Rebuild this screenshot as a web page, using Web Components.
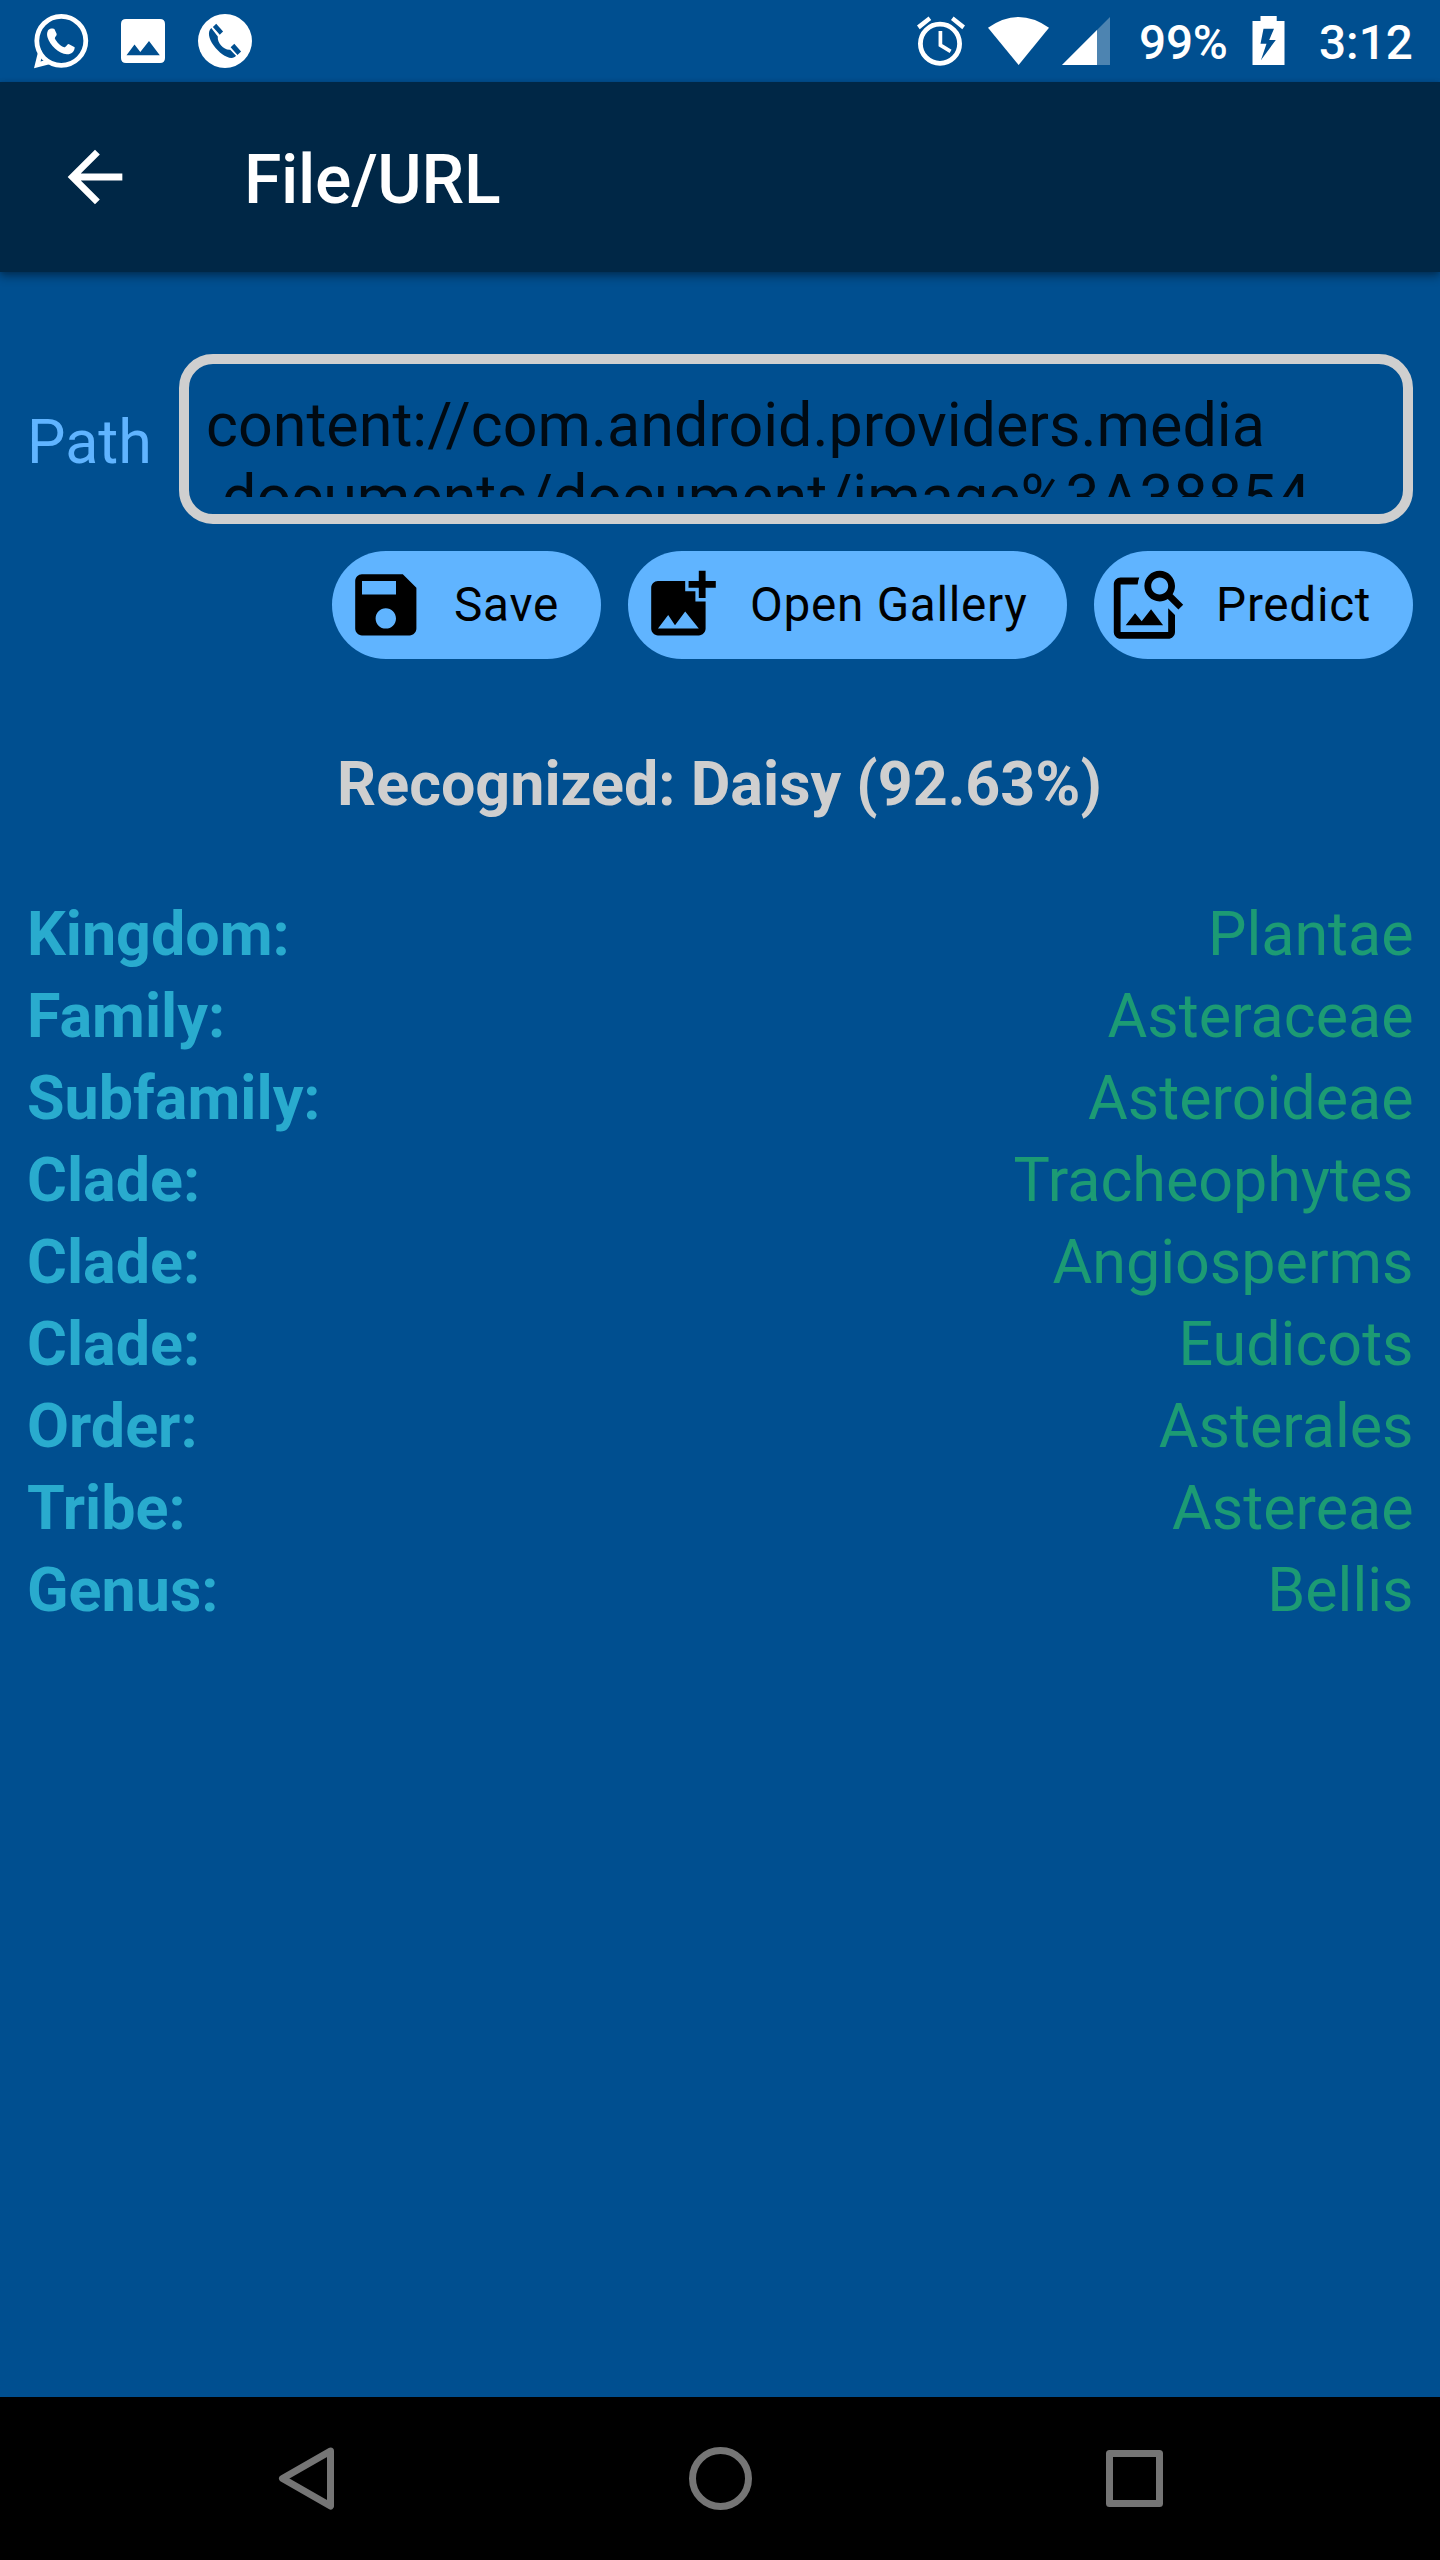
<!DOCTYPE html>
<html lang="en">
<head>
<meta charset="utf-8">
<title>File/URL</title>
<style>
html, body { margin: 0; height: 100%; }
body { font-family: Roboto, sans-serif; background: #004f90; }
</style>
</head>
<body>
<plant-app></plant-app>
<script>
const define = (name, html) => {
  const template = document.createElement('template');
  template.innerHTML = html;
  customElements.define(name, class extends HTMLElement {
    constructor() {
      super();
      this.attachShadow({ mode: 'open' }).appendChild(template.content.cloneNode(true));
    }
  });
};

define('status-bar', `
<style>
:host { display: flex; justify-content: space-between; height: 82px; box-sizing: border-box; background: #004f90; color: #fff; font-size: 47.7px; font-weight: 500; line-height: 82px; }
div { display: flex; align-items: flex-start; }
svg { display: block; height: 82px; fill: #fff; }
span { display: block; padding-top: 1.5px; white-space: nowrap; }
.pct { width: 113px; margin-left: 28px; letter-spacing: -.2px; }
.time { width: 96px; margin-left: 34px; }
.right { padding-right: 25px; }
</style>
<div>
  <svg width="260" viewBox="0 0 260 82">
    <circle cx="61.3" cy="40.8" r="24.5" fill="none" stroke="#fff" stroke-width="4.8"/>
    <path d="M38.5 50 L34 68.3 L49.5 64.3 L52 62 L47.5 59.5 L40.5 61.5 L42.8 54 L40 48Z"/>
    <path d="M50.2 28.8 C47.8 29.5 46.4 33 47.5 37.2 C50 45.5 58.5 53.5 67 54.2 C71 54.4 74.5 52 74.7 47.2 L68.6 44 C67.2 44 66 47.4 64.2 47.3 C60.6 46.2 56.4 41.8 54.8 38.2 C55 36.6 57.3 35.4 56.6 33.7 L54.4 29.1 C53.9 28.1 51.8 28.3 50.2 28.8Z"/>
    <path fill-rule="evenodd" d="M126 19H160Q165 19 165 24V58Q165 63 160 63H126Q121 63 121 58V24Q121 19 126 19ZM126.5 55.3H159.8L149 41L140.3 52L134.5 44.6Z"/>
    <circle cx="225" cy="41" r="27"/>
    <g fill="#004f90">
      <path d="M211.3 28 C207.3 31.5 208.7 38.5 213.5 45.2 C219 52.5 225.5 57.5 231.5 58 C233.5 57.9 234.9 57 236 55.7 L230.2 49.7 C224.4 50.5 217 43.5 217.8 36.5Z"/>
      <path d="M212.9 27.1L216.2 23.8L223.1 31.5L219.7 34.8Z"/>
      <path d="M230.6 47.3L234.3 43.8L241.1 51.5L237.5 55Z"/>
    </g>
    <path d="M212.4 27.6L219.2 35.3M230.1 47.8L237 55.5" stroke="#fff" stroke-width=".6" fill="none"/>
  </svg>
</div>
<div class="right">
  <svg width="195" viewBox="916 0 195 82">
    <circle cx="940" cy="43.7" r="19.6" fill="none" stroke="#fff" stroke-width="4.8"/>
    <path d="M917 25.5L928.6 16.6L931.2 20.1L919.7 29.2ZM965 25.5L953.6 16.6L951 20.1L962.3 29.2Z"/>
    <path d="M940.4 31V45.2L950.6 51.3" fill="none" stroke="#fff" stroke-width="3.7"/>
    <path d="M988 27.8 Q1018.5 6.2 1049 27.8 L1018.6 65Z"/>
    <path d="M1062 65L1110 17V65Z" opacity=".3"/>
    <path d="M1062 65L1097 30V65Z"/>
  </svg>
  <span class="pct">99%</span>
  <svg width="33" viewBox="1252 0 33 82">
    <path fill-rule="evenodd" d="M1260.5 16H1276.7V21H1284.5V65H1252.5V21H1260.5ZM1263.5 28.7L1260.5 43.8H1266.5L1261 60L1275.8 40H1269.2L1274 28.7Z"/>
  </svg>
  <span class="time">3:12</span>
</div>`);

define('app-bar', `
<style>
:host { display: flex; align-items: center; height: 190px; background: #002746; color: #fff; box-shadow: 0 5px 9px rgba(0,0,0,.32), 0 1px 5px rgba(0,0,0,.18); z-index: 1; }
svg { display: block; width: 82px; height: 82px; margin-left: 54px; fill: #fff; }
h1 { margin: 5px 0 0 108px; font-size: 67.9px; font-weight: 500; line-height: 80px; letter-spacing: -.3px; }
</style>
<svg viewBox="0 0 24 24"><path d="M20 11H7.83l5.59-5.59L12 4l-8 8 8 8 1.41-1.41L7.83 13H20v-2z"/></svg>
<h1><slot></slot></h1>`);

define('path-field', `
<style>
:host { display: flex; align-items: center; }
label { width: 152px; padding-top: 5px; font-size: 61px; line-height: 72px; color: #60b4ff; }
.box { flex: 1; height: 170px; box-sizing: border-box; border: 10px solid #cfcfcf; border-radius: 34px; padding: 25px 16px 17px 17px; }
.clip { height: 108px; overflow: hidden; font-size: 61px; line-height: 72px; color: rgba(0,0,0,.87); white-space: pre; }
</style>
<label>Path</label>
<div class="box"><div class="clip"><slot></slot></div></div>`);

define('chip-button', `
<style>
:host { display: flex; align-items: center; height: 108px; border-radius: 54px; background: #60b4ff; color: #000; box-sizing: border-box; padding-left: 13px; font-size: 47.7px; line-height: 56px; letter-spacing: .7px; white-space: nowrap; }
::slotted(svg) { display: block; width: 81.6px; height: 81.6px; margin-right: 27.5px; flex: none; }
</style>
<slot name="icon"></slot><span><slot></slot></span>`);

define('taxon-row', `
<style>
:host { display: flex; justify-content: space-between; font-size: 61px; line-height: 82px; color: #1c9b74; margin-right: -.6px; }
b { color: #29abce; font-weight: 700; }
</style>
<b><slot name="rank"></slot></b><slot></slot>`);

define('nav-bar', `
<style>
:host { display: flex; align-items: center; justify-content: center; gap: 354px; height: 163px; background: #000; }
svg { display: block; width: 63px; height: 63px; fill: none; stroke: #757575; stroke-width: 7; stroke-linejoin: round; }
.back, .recent { width: 60px; }
</style>
<svg class="back" viewBox="0 0 60 63"><path d="M55.5 4L7.5 31.5L55.5 59Z"/></svg>
<svg viewBox="0 0 63 63"><circle cx="31.5" cy="31.5" r="28"/></svg>
<svg class="recent" viewBox="0 0 60 63"><rect x="3.5" y="6.5" width="50" height="50"/></svg>`);

define('plant-app', `
<style>
:host { display: flex; flex-direction: column; width: 1440px; height: 2560px; background: #004f90; overflow: hidden; }
main { flex: 1; padding: 82px 27px 0; }
.actions { display: flex; justify-content: flex-end; gap: 27px; margin-top: 27px; }
.save { width: 269px; } .open { width: 439px; } .predict { width: 319px; }
h2 { margin: 89px 1px 73px 0; font-size: 61px; line-height: 72px; font-weight: 700; text-align: center; color: #cfcfcf; }
</style>
<status-bar></status-bar>
<app-bar>File/URL</app-bar>
<main>
  <path-field>content://com.android.providers.media
.documents/document/image%3A38854</path-field>
  <div class="actions">
    <chip-button class="save"><svg slot="icon" viewBox="0 0 24 24"><path d="M17 3H5c-1.11 0-2 .9-2 2v14c0 1.1.89 2 2 2h14c1.1 0 2-.9 2-2V7l-4-4zm-5 16c-1.66 0-3-1.34-3-3s1.34-3 3-3 3 1.34 3 3-1.34 3-3 3zm3-10H5V5h10v4z"/></svg>Save</chip-button>
    <chip-button class="open"><svg slot="icon" viewBox="0 0 24 24"><path d="M19 7v2.99s-1.99.01-2 0V7h-3s.01-1.99 0-2h3V2h2v3h3v2h-3zm-3 4V8h-3V5H5c-1.1 0-2 .9-2 2v12c0 1.1.9 2 2 2h12c1.1 0 2-.9 2-2v-8h-3zM5 19l3-4 2 3 3-4 4 5H5z"/></svg>Open Gallery</chip-button>
    <chip-button class="predict"><svg slot="icon" viewBox="0 0 24 24"><path d="M18 13v7H4V6h5.02c.05-.71.22-1.38.48-2H4c-1.1 0-2 .9-2 2v14c0 1.1.9 2 2 2h14c1.1 0 2-.9 2-2v-5l-2-2zm-1.5 5h-11l2.75-3.53 1.96 2.36 2.75-3.54L16.5 18zm2.8-9.11c.44-.7.7-1.51.7-2.39C20 4.01 17.99 2 15.5 2S11 4.01 11 6.5s2.01 4.5 4.49 4.5c.88 0 1.7-.26 2.39-.7L21 13.42 22.42 12 19.3 8.89zM15.5 9C14.12 9 13 7.88 13 6.5S14.12 4 15.5 4 18 5.12 18 6.5 16.88 9 15.5 9z"/></svg>Predict</chip-button>
  </div>
  <h2>Recognized: Daisy (92.63%)</h2>
  <taxon-row><span slot="rank">Kingdom:</span>Plantae</taxon-row>
  <taxon-row><span slot="rank">Family:</span>Asteraceae</taxon-row>
  <taxon-row><span slot="rank">Subfamily:</span>Asteroideae</taxon-row>
  <taxon-row><span slot="rank">Clade:</span>Tracheophytes</taxon-row>
  <taxon-row><span slot="rank">Clade:</span>Angiosperms</taxon-row>
  <taxon-row><span slot="rank">Clade:</span>Eudicots</taxon-row>
  <taxon-row><span slot="rank">Order:</span>Asterales</taxon-row>
  <taxon-row><span slot="rank">Tribe:</span>Astereae</taxon-row>
  <taxon-row><span slot="rank">Genus:</span>Bellis</taxon-row>
</main>
<nav-bar></nav-bar>`);
</script>
</body>
</html>
